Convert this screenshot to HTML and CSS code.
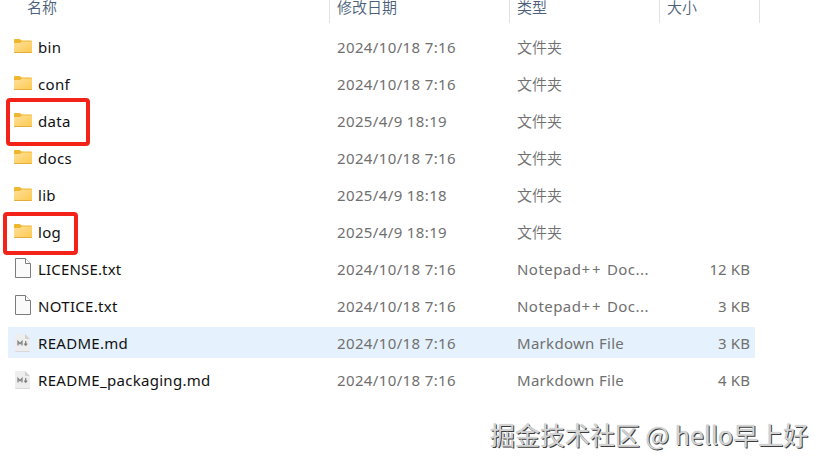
FILE: index.html
```html
<!DOCTYPE html>
<html lang="zh-CN">
<head>
    <meta charset="UTF-8">
    <meta name="viewport" content="width=device-width, initial-scale=1.0">
    <title>文件列表</title>
    <link rel="stylesheet" href="styles.css">
</head>
<body>
    <!-- icons -->
    <svg class="defs" width="0" height="0">
        <defs>
            <linearGradient id="folder-fill" x1="0" y1="0" x2="1" y2="1">
                <stop offset="0" stop-color="#ffe09a"/>
                <stop offset="1" stop-color="#fdc94f"/>
            </linearGradient>
            <symbol id="folder" viewBox="0 0 18 14">
                <path d="M0 1Q0 0 1 0H5.6L7.8 1.6H17Q18 1.6 18 2.6V6H0Z" fill="#efb62e"/>
                <path d="M0 4H6L8 2.6H18V13Q18 14 17 14H1Q0 14 0 13Z" fill="url(#folder-fill)"/>
                <path d="M0 13H18Q18 14 17 14H1Q0 14 0 13Z" fill="#e3ad3c"/>
            </symbol>
            <symbol id="file" viewBox="0 0 16 20">
                <path d="M.5 .5H10.5L15.5 5.5V19.5H.5Z" fill="#fafafa" stroke="#7c7c7c"/>
                <path d="M10.5 .5V5.5H15.5" fill="#fff" stroke="#7c7c7c"/>
            </symbol>
            <symbol id="markdown" viewBox="0 0 15 18">
                <path d="M1 0H10L15 5V17Q15 18 14 18H1Q0 18 0 17V1Q0 0 1 0Z" fill="#eeeeee"/>
                <path d="M10 0V5H15Z" fill="#d2d2d2"/>
                <path d="M0 17H15Q15 18 14 18H1Q0 18 0 17Z" fill="#d8d8d8"/>
                <path d="M3 11.5V7.5L5 9.7L7 7.5V11.5M10.7 7V11M9.2 9.6L10.7 11.3L12.2 9.6" fill="none" stroke="#858585" stroke-width="1.3"/>
            </symbol>
        </defs>
    </svg>

    <div class="explorer">
        <div class="header">
            <div class="name">名称</div>
            <div class="date">修改日期</div>
            <div class="type">类型</div>
            <div class="size">大小</div>
        </div>

        <div class="list">
            <div class="row">
                <div class="name"><svg class="folder"><use href="#folder"/></svg><span>bin</span></div>
                <div class="date">2024/10/18 7:16</div>
                <div class="type cjk">文件夹</div>
                <div class="size"></div>
            </div>
            <div class="row">
                <div class="name"><svg class="folder"><use href="#folder"/></svg><span>conf</span></div>
                <div class="date">2024/10/18 7:16</div>
                <div class="type cjk">文件夹</div>
                <div class="size"></div>
            </div>
            <div class="row">
                <div class="name"><svg class="folder"><use href="#folder"/></svg><span>data</span></div>
                <div class="date">2025/4/9 18:19</div>
                <div class="type cjk">文件夹</div>
                <div class="size"></div>
                <div class="mark mark-data"></div>
            </div>
            <div class="row">
                <div class="name"><svg class="folder"><use href="#folder"/></svg><span>docs</span></div>
                <div class="date">2024/10/18 7:16</div>
                <div class="type cjk">文件夹</div>
                <div class="size"></div>
            </div>
            <div class="row">
                <div class="name"><svg class="folder"><use href="#folder"/></svg><span>lib</span></div>
                <div class="date">2025/4/9 18:18</div>
                <div class="type cjk">文件夹</div>
                <div class="size"></div>
            </div>
            <div class="row">
                <div class="name"><svg class="folder"><use href="#folder"/></svg><span>log</span></div>
                <div class="date">2025/4/9 18:19</div>
                <div class="type cjk">文件夹</div>
                <div class="size"></div>
                <div class="mark mark-log"></div>
            </div>
            <div class="row">
                <div class="name"><svg class="file"><use href="#file"/></svg><span class="tight">LICENSE.txt</span></div>
                <div class="date">2024/10/18 7:16</div>
                <div class="type notepad">Notepad<b>++</b> Doc...</div>
                <div class="size">12 KB</div>
            </div>
            <div class="row">
                <div class="name"><svg class="file"><use href="#file"/></svg><span>NOTICE.txt</span></div>
                <div class="date">2024/10/18 7:16</div>
                <div class="type notepad">Notepad<b>++</b> Doc...</div>
                <div class="size">3 KB</div>
            </div>
            <div class="row active">
                <div class="name"><svg class="markdown"><use href="#markdown"/></svg><span>README.md</span></div>
                <div class="date">2024/10/18 7:16</div>
                <div class="type">Markdown File</div>
                <div class="size">3 KB</div>
            </div>
            <div class="row">
                <div class="name"><svg class="markdown"><use href="#markdown"/></svg><span>README_packaging.md</span></div>
                <div class="date">2024/10/18 7:16</div>
                <div class="type">Markdown File</div>
                <div class="size">4 KB</div>
            </div>
        </div>
    </div>

    <div class="watermark">掘金技术社区 @ hello早上好</div>
</body>
</html>
```
FILE: styles.css
```css
*{
    margin: 0;
    padding: 0;
    box-sizing: border-box;
}
body{
    width: 826px;
    height: 466px;
    overflow: hidden;
    background: #fff;
    font-family: "Noto Sans", "Noto Sans CJK SC", sans-serif;
    font-size: 15px;
    color: #707070;
}
.defs{
    position: absolute;
}

/* column titles */
.header{
    display: grid;
    grid-template-columns: 321px 180px 150px 100px;
    height: 23px;
    margin-left: 9px;
    font-family: "Noto Sans CJK SC", sans-serif;
    font-weight: 350;
    line-height: 14px;
    color: #4c607a;
}
.header div{
    padding-left: 7px;
    border-right: 1px solid #e2e2e2;
}
.header .name{
    padding-left: 18px;
}

.list{
    display: flex;
    flex-direction: column;
    gap: 6px;
    margin: 8px 0 0 8px;
    width: 747px;
}
.row{
    position: relative;
    display: grid;
    grid-template-columns: 329px 180px 150px 83px;
    height: 31px;
    line-height: 33px;
    letter-spacing: 0.3px;
    white-space: nowrap;
}
.row.active{
    background: #e5f2fd;
}
.row .name{
    display: flex;
    color: #111;
}
.row .name span{
    margin-left: 6px;
}
.row .name .tight{
    letter-spacing: 0.17px;
}
.row .date{
    letter-spacing: 0.37px;
}
.row .notepad{
    letter-spacing: 0.45px;
}
.notepad b{
    font-weight: 400;
    letter-spacing: 2px;
}
.row .size{
    text-align: right;
    letter-spacing: 0.1px;
}
.row .cjk{
    font-family: "Noto Sans CJK SC", sans-serif;
    font-weight: 350;
    line-height: 31px;
    letter-spacing: 0;
}

.folder{
    width: 18px;
    height: 14px;
    margin: 8px 0 0 6px;
}
.file{
    width: 16px;
    height: 20px;
    margin: 5px 1px 0 7px;
}
.markdown{
    width: 15px;
    height: 18px;
    margin: 7px 2px 0 7px;
}

/* red frames around data and log */
.mark{
    position: absolute;
    border: 4px solid #f3231a;
    border-radius: 4px;
}
.mark-data{
    left: -2px;
    top: -7px;
    width: 84px;
    height: 48px;
}
.mark-log{
    left: -5px;
    top: -4px;
    width: 75px;
    height: 43px;
}

.watermark{
    position: absolute;
    left: 490px;
    top: 416px;
    font-family: "Noto Sans CJK SC", sans-serif;
    font-size: 25px;
    line-height: 36px;
    white-space: nowrap;
    color: #d4d4d4;
    text-shadow: 1px 1px 0 #3c3c3c, 0 0 1px #aaa;
}
```
